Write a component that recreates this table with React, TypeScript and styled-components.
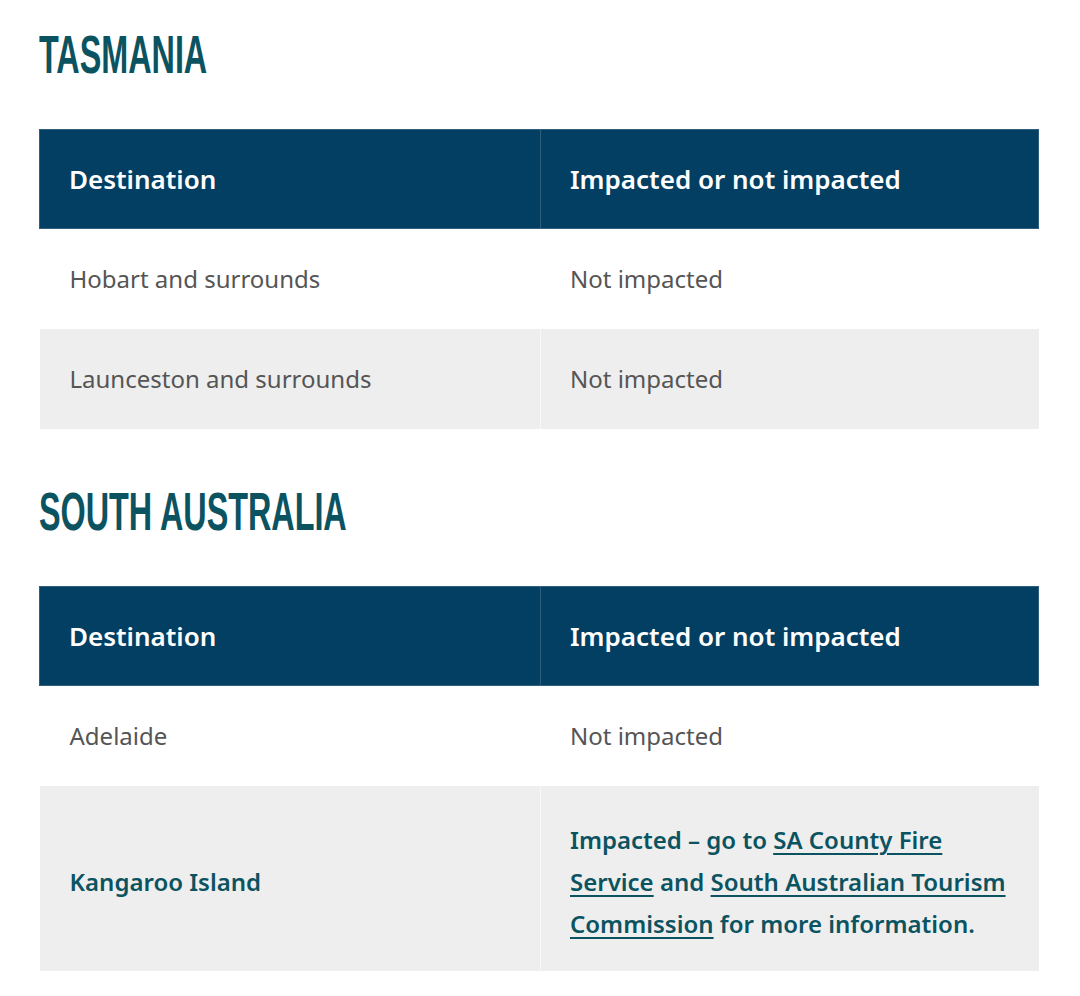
import React from "react";
import styled, { createGlobalStyle } from "styled-components";

const Global = createGlobalStyle`
  html, body { margin: 0; padding: 0; background: #ffffff; }
  body { font-family: "Noto Sans", "Open Sans", sans-serif; }
`;

const Page = styled.main`
  padding: 25px 41px 20px 39px;
  background: #fff;
`;

const Section = styled.section`
  & + & { margin-top: 53px; }
`;

const Heading = styled.h2`
  margin: 0 0 44px;
  display: inline-block;
  font-family: "Liberation Sans Narrow", "Liberation Sans", sans-serif;
  font-weight: 700;
  font-size: 53px;
  line-height: 60px;
  color: #0b5360;
  transform: scaleX(0.61);
  transform-origin: left center;
  white-space: nowrap;
`;

const Table = styled.table`
  width: 1000px;
  border-collapse: collapse;
  table-layout: fixed;
`;

const FirstCol = styled.col`
  width: 501px;
`;

const HeadCell = styled.th`
  background: #023f63;
  color: #fff;
  text-align: left;
  font-weight: 600;
  font-size: 26px;
  line-height: 42px;
  padding: 28px 30px 28px 29px;
  border: 1px solid #2f5f7d;
`;

const Row = styled.tr<{ $striped?: boolean }>`
  background: ${(p) => (p.$striped ? "#eeeeee" : "#ffffff")};
`;

const Cell = styled.td<{ $strong?: boolean }>`
  padding: 29px 30px 29px 29px;
  font-size: 24px;
  line-height: 42px;
  color: ${(p) => (p.$strong ? "#0b5360" : "#555555")};
  font-weight: ${(p) => (p.$strong ? 600 : 400)};
  border-left: 1px solid rgba(255, 255, 255, 0.6);
  vertical-align: middle;
  &:first-child { border-left: none; padding-left: 30px; }
`;

const TallCell = styled(Cell)`
  padding-top: 33px;
  padding-bottom: 26px;
`;

const Link = styled.a`
  color: #0b5360;
  text-decoration: underline;
  text-decoration-thickness: 2px;
  text-underline-offset: 4px;
`;

function Columns() {
  return (
    <colgroup>
      <FirstCol />
      <col />
    </colgroup>
  );
}

export default function App() {
  return (
    <>
      <Global />
      <Page>
        <Section>
          <Heading>TASMANIA</Heading>
          <Table>
            <Columns />
            <thead>
              <tr>
                <HeadCell>Destination</HeadCell>
                <HeadCell>Impacted or not impacted</HeadCell>
              </tr>
            </thead>
            <tbody>
              <Row>
                <Cell>Hobart and surrounds</Cell>
                <Cell>Not impacted</Cell>
              </Row>
              <Row $striped>
                <Cell>Launceston and surrounds</Cell>
                <Cell>Not impacted</Cell>
              </Row>
            </tbody>
          </Table>
        </Section>
        <Section>
          <Heading>SOUTH AUSTRALIA</Heading>
          <Table>
            <Columns />
            <thead>
              <tr>
                <HeadCell>Destination</HeadCell>
                <HeadCell>Impacted or not impacted</HeadCell>
              </tr>
            </thead>
            <tbody>
              <Row>
                <Cell>Adelaide</Cell>
                <Cell>Not impacted</Cell>
              </Row>
              <Row $striped>
                <TallCell $strong>Kangaroo Island</TallCell>
                <TallCell $strong>
                  Impacted – go to <Link href="#">SA County Fire Service</Link> and{" "}
                  <Link href="#">South Australian Tourism Commission</Link> for more information.
                </TallCell>
              </Row>
            </tbody>
          </Table>
        </Section>
      </Page>
    </>
  );
}
